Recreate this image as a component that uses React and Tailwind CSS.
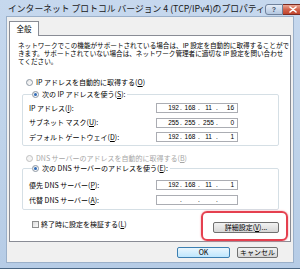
import React from "react";

function Radio({ checked, disabled }) {
  return (
    <span
      className={
        "inline-flex items-center justify-center w-[7px] h-[7px] rounded-full border shrink-0 " +
        (disabled
          ? "border-[#c0c0c0] bg-[#f4f4f4]"
          : "border-[#8d97a3] bg-gradient-to-br from-[#e6e6e6] to-[#ffffff]")
      }
    >
      {checked && <span className="w-[3px] h-[3px] rounded-full bg-[#2e6ab8]" />}
    </span>
  );
}

function IpBox({ parts }) {
  const p = parts || ["", "", "", ""];
  return (
    <div className="w-[82px] h-[10px] border border-[#abadb3] bg-white flex items-center text-[6.5px] leading-none font-['Liberation_Sans',sans-serif]">
      <span className="w-[23px] text-right pr-[1px]">{p[0]}</span>
      <span className="w-[2px] text-center">.</span>
      <span className="w-[16px] text-center">{p[1]}</span>
      <span className="w-[2px] text-center">.</span>
      <span className="w-[16px] text-center pl-[1px]">{p[2]}</span>
      <span className="w-[2px] text-center">.</span>
      <span className="flex-1 text-right pr-[3px]">{p[3]}</span>
    </div>
  );
}

function Row({ label, parts, h = "h-[14.5px]" }) {
  return (
    <div className={"flex items-center " + h}>
      <span className="w-[127px] whitespace-nowrap">{label}</span>
      <IpBox parts={parts} />
    </div>
  );
}

function Btn({ children, primary, w }) {
  return (
    <div
      className={
        "h-[11px] rounded-[2px] border flex items-center justify-center text-[7px] leading-none " +
        w +
        (primary
          ? " border-[#3c7fb1] bg-gradient-to-b from-[#eaf6fd] to-[#bee6fd]"
          : " border-[#707070] bg-gradient-to-b from-[#f2f2f2] to-[#d6d6d6]")
      }
    >
      {children}
    </div>
  );
}

export default function App() {
  return (
    <div className="w-[300px] h-[269px] flex flex-col bg-gradient-to-b from-[#c6d8ee] via-[#bfd3ea] to-[#b6cce6] border-b border-[#4a6683] overflow-hidden font-['Noto_Sans_CJK_JP','Noto_Sans',sans-serif] text-black">
      {/* title bar */}
      <div className="h-[16px] flex items-start pl-[8px] pr-[6px]">
        <div className="mt-[5px] text-[8.8px] leading-none whitespace-nowrap text-[#1a1a1a]">
          インターネット プロトコル バージョン 4 (TCP/IPv4)のプロパティ
        </div>
        <div className="ml-auto mt-[4px] flex">
          <div className="w-[18px] h-[11px] rounded-l-[3px] border border-[#6f819b] bg-gradient-to-b from-[#e4ecf7] to-[#b4c7e0] flex items-center justify-center text-[7px] leading-none font-bold text-[#3e4f66] font-['Liberation_Sans',sans-serif]">
            ?
          </div>
          <div className="w-[21px] h-[11px] rounded-r-[3px] border border-l-0 border-[#7a2a22] bg-gradient-to-b from-[#e9a594] via-[#d2624c] to-[#c0442c] flex items-center justify-center">
            <svg width="8" height="7" viewBox="0 0 8 7">
              <path d="M1 1 L7 6 M7 1 L1 6" stroke="#ffffff" strokeWidth="1.6" strokeLinecap="round" />
            </svg>
          </div>
        </div>
      </div>

      {/* client area */}
      <div className="flex-1 mx-[6px] mb-[5px] bg-[#f0f0f0] border border-[#9bb0c9] flex flex-col px-[2px]">
        {/* tab */}
        <div className="pt-[4px] flex">
          <div className="relative z-10 -mb-px w-[30px] h-[15px] bg-white border border-b-0 border-[#898c95] flex items-center justify-center text-[7.5px] leading-none">
            全般
          </div>
        </div>
        {/* panel */}
        <div className="h-[207px] bg-white border border-[#898c95] flex flex-col text-[7px] leading-none">
          <div className="pl-[8px] pt-[5px] flex flex-col text-[6.6px] leading-none whitespace-nowrap">
            <span className="h-[8px] flex items-center">
              ネットワークでこの機能がサポートされている場合は、IP 設定を自動的に取得することがで
            </span>
            <span className="h-[8px] flex items-center">
              きます。サポートされていない場合は、ネットワーク管理者に適切な IP 設定を問い合わせ
            </span>
            <span className="h-[8px] flex items-center">てください。</span>
          </div>

          <div className="mt-[12px] ml-[16px] h-[10px] flex items-center gap-[3px]">
            <Radio />
            <span>IP アドレスを自動的に取得する(<u>O</u>)</span>
          </div>

          <fieldset className="ml-[12px] w-[257px] border border-[#d5dfe5] rounded-[2px] pl-[6px] mt-[2px]">
            <legend className="h-[10px] ml-[3px] pr-[2px] flex items-center gap-[3px]">
              <Radio checked />
              <span>次の IP アドレスを使う(<u>S</u>):</span>
            </legend>
            <div className="mt-[2px]">
              <Row label={<>IP アドレス(<u>I</u>):</>} parts={["192", "168", "11", "16"]} />
              <Row label={<>サブネット マスク(<u>U</u>):</>} parts={["255", "255", "255", "0"]} />
              <Row label={<>デフォルト ゲートウェイ(<u>D</u>):</>} parts={["192", "168", "11", "1"]} />
            </div>
          </fieldset>

          <div className="mt-[8px] ml-[16px] h-[10px] flex items-center gap-[3px] text-[#a6a6a6]">
            <Radio disabled />
            <span>DNS サーバーのアドレスを自動的に取得する(<u>B</u>)</span>
          </div>

          <fieldset className="ml-[12px] w-[257px] border border-[#d5dfe5] rounded-[2px] pl-[6px] pb-[1px]">
            <legend className="h-[10px] ml-[3px] pr-[2px] flex items-center gap-[3px]">
              <Radio checked />
              <span>次の DNS サーバーのアドレスを使う(<u>E</u>):</span>
            </legend>
            <div className="mt-[4px]">
              <Row h="h-[15px]" label={<>優先 DNS サーバー(<u>P</u>):</>} parts={["192", "168", "11", "1"]} />
              <Row h="h-[15px]" label={<>代替 DNS サーバー(<u>A</u>):</>} parts={null} />
            </div>
          </fieldset>

          <div className="mt-[10px] flex items-start">
            <div className="ml-[22px] h-[10px] flex items-center gap-[2px]">
              <span className="w-[7px] h-[7px] border border-[#8e8f8f] bg-gradient-to-br from-[#dcdcdc] to-[#fbfbfb]" />
              <span>終了時に設定を検証する(<u>L</u>)</span>
            </div>
            <div className="ml-auto mr-[11px] mt-[2px] relative">
              <Btn w="w-[66px]">
                詳細設定(<u>V</u>)...
              </Btn>
              <div className="absolute -left-[12px] -right-[9px] -top-[11px] -bottom-[8px] border-2 border-[#e5404f] rounded-[6px] shadow-[0_0_2px_#f08a95]" />
            </div>
          </div>
        </div>

        {/* bottom buttons */}
        <div className="mt-[5px] flex justify-end gap-[7px] pr-[13px]">
          <Btn primary w="w-[53px]">OK</Btn>
          <Btn w="w-[41px]">キャンセル</Btn>
        </div>
      </div>
    </div>
  );
}
